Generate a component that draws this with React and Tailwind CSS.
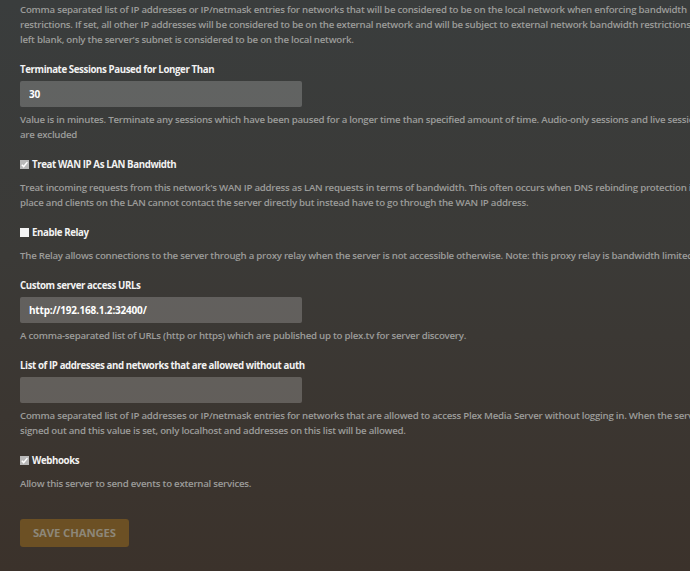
import { useState } from "react";

const FONT = { fontFamily: '"Open Sans", "Noto Sans", sans-serif' };

function Desc({ children, className = "" }) {
  return (
    <p
      className={`text-[9.7px] font-semibold leading-[15px] tracking-[-0.25px] text-[#9c9c9a] ${className}`}
    >
      {children}
    </p>
  );
}

function Label({ children }) {
  return (
    <div className="text-[9.7px] font-bold leading-[15px] tracking-[-0.4px] text-[#f2f2f2]">
      {children}
    </div>
  );
}

function TextField({ label, value, help }) {
  return (
    <div className="mt-[15px]">
      <Label>{label}</Label>
      <input
        defaultValue={value}
        className="mt-[4px] block h-[26px] w-[282px] rounded-[2px] bg-white/20 px-[9px] text-[10px] font-bold tracking-[-0.2px] text-white outline-none"
      />
      <Desc className="mt-[5px]">{help}</Desc>
    </div>
  );
}

function Check({ checked }) {
  return (
    <span
      className={`mr-[3px] inline-flex h-[9px] w-[9px] shrink-0 items-center justify-center ${
        checked ? "bg-[#b9b9b9]" : "bg-[#f4f4f4]"
      }`}
    >
      {checked && (
        <svg viewBox="0 0 10 10" className="h-[9px] w-[9px]">
          <path d="M2 5.2 L4.1 7.3 L8.2 2.4" fill="none" stroke="#fff" strokeWidth="1.6" />
        </svg>
      )}
    </span>
  );
}

function CheckField({ label, help, initial }) {
  const [on, setOn] = useState(initial);
  return (
    <div className="mt-[15px]">
      <button
        type="button"
        onClick={() => setOn(!on)}
        className="flex items-center text-[9.7px] font-bold leading-[15px] tracking-[-0.4px] text-[#f2f2f2]"
      >
        <Check checked={on} />
        {label}
      </button>
      <Desc className="mt-[8px]">{help}</Desc>
    </div>
  );
}

export default function App() {
  return (
    <div
      style={FONT}
      className="h-[571px] w-[690px] overflow-hidden bg-[linear-gradient(180deg,#3a3d3d_0%,#3b3a37_45%,#3b322b_100%)]"
    >
      <div className="w-[738px] px-[20px] pt-[2px]">
        <Desc>
          Comma separated list of IP addresses or IP/netmask entries for networks that will be
          considered to be on the local network when enforcing bandwidth restrictions. If set, all
          other IP addresses will be considered to be on the external network and will be subject to
          external network bandwidth restrictions. If left blank, only the server's subnet is
          considered to be on the local network.
        </Desc>

        <TextField
          label="Terminate Sessions Paused for Longer Than"
          value="30"
          help="Value is in minutes. Terminate any sessions which have been paused for a longer time than specified amount of time. Audio-only sessions and live sessions are excluded"
        />

        <CheckField
          initial
          label="Treat WAN IP As LAN Bandwidth"
          help="Treat incoming requests from this network's WAN IP address as LAN requests in terms of bandwidth. This often occurs when DNS rebinding protection is in place and clients on the LAN cannot contact the server directly but instead have to go through the WAN IP address."
        />

        <CheckField
          initial={false}
          label="Enable Relay"
          help="The Relay allows connections to the server through a proxy relay when the server is not accessible otherwise. Note: this proxy relay is bandwidth limited."
        />

        <TextField
          label="Custom server access URLs"
          value="http://192.168.1.2:32400/"
          help="A comma-separated list of URLs (http or https) which are published up to plex.tv for server discovery."
        />

        <TextField
          label="List of IP addresses and networks that are allowed without auth"
          value=""
          help="Comma separated list of IP addresses or IP/netmask entries for networks that are allowed to access Plex Media Server without logging in. When the server is signed out and this value is set, only localhost and addresses on this list will be allowed."
        />

        <CheckField
          initial
          label="Webhooks"
          help="Allow this server to send events to external services."
        />

        <button
          type="button"
          className="mt-[28px] h-[28px] rounded-[3px] bg-[#6c5024] px-[13px] text-[11.3px] font-bold uppercase tracking-[-0.1px] text-[#8d8779]"
        >
          Save Changes
        </button>
      </div>
    </div>
  );
}
